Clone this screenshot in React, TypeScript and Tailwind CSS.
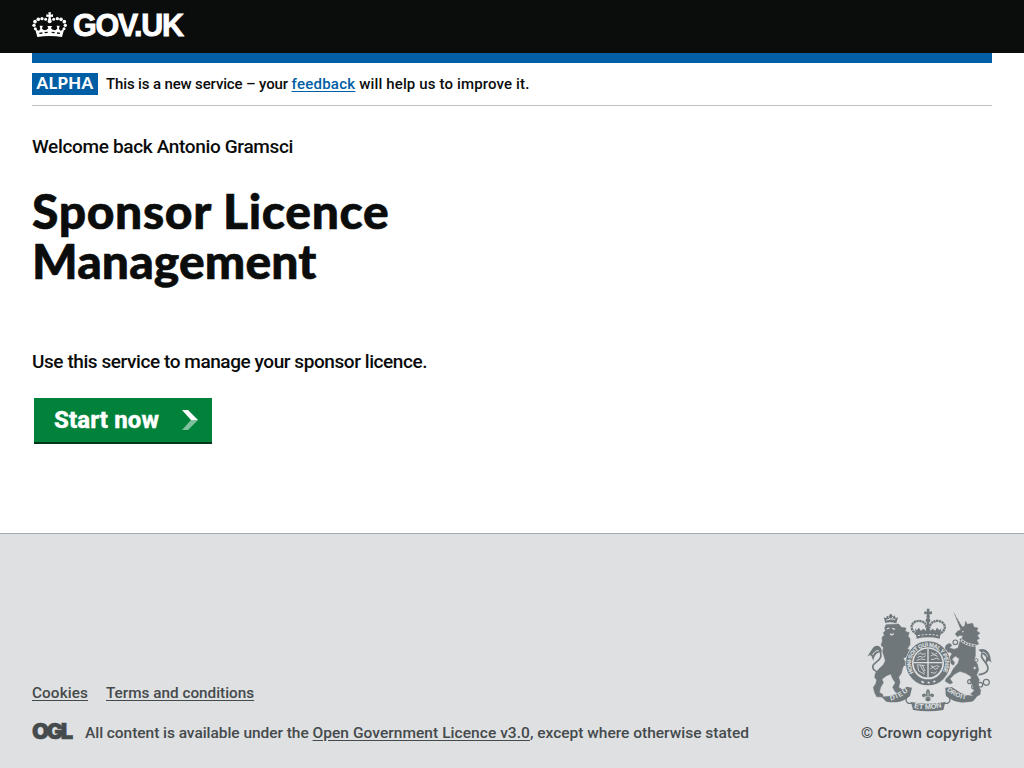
import React from "react";

function Crown() {
  return (
    <svg viewBox="0 0 132 120" className="h-[40px] w-[44px]" fill="#fff" aria-hidden="true">
      <path d="M61 22h8l-1 7 7-1v8l-7-1 2 12-5 4-5-4 2-12-7 1v-8l7 1z" />
      <circle cx="65" cy="49" r="6" />
      <circle cx="53" cy="43" r="4.5" />
      <circle cx="42" cy="41" r="5" />
      <circle cx="31" cy="43" r="5.5" />
      <circle cx="21" cy="50" r="5.5" />
      <circle cx="18" cy="61" r="5" />
      <circle cx="22" cy="71" r="4.5" />
      <circle cx="77" cy="43" r="4.5" />
      <circle cx="88" cy="41" r="5" />
      <circle cx="99" cy="43" r="5.5" />
      <circle cx="109" cy="50" r="5.5" />
      <circle cx="112" cy="61" r="5" />
      <circle cx="108" cy="71" r="4.5" />
      <path d="M28 96l-8-29 8 9 5 1 4-6-2-9h9l-2 9 6 5 8-2 5-4-3-7h14l-3 7 5 4 8 2 6-5-2-9h9l-2 9 4 6 5-1 8-9-8 29c-24-4-50-4-74 0z" />
      <path d="M34 85l9-1M50 83l9-1M71 82l9 1M87 84l9 1" stroke="#0b0c0c" strokeWidth="4" />
    </svg>
  );
}

function Crest() {
  return (
    <svg viewBox="0 0 420 360" className="h-[120px] w-[140px]" fill="#6f777b" aria-hidden="true">
      <defs>
        <path id="garter" d="M161 218A51 51 0 1 1 247 218" />
        <path id="dieu" d="M92 301Q123 294 147 271" />
        <path id="mon" d="M162 324Q204 332 248 321" />
        <path id="droit" d="M260 271Q287 294 321 299" />
      </defs>

      <path d="M76 69l-5-17 7 3 3-8 5 3 4-8 5 1 4 7 5-4 3 9 7-3-5 18c-11-4-22-4-33-1z" />
      <path d="M79 60q13-5 27-2M86 52l4 5M98 51l-2 5" fill="none" stroke="#dee0e2" strokeWidth="3" />
      <path
        d="M78 74L74 84 76 92 70 98 73 106 66 112 67 124 63 136 70 142 68 156 72 168 76 182 70 194 56 208 46 220 44 232 50 240 47 252 40 262 44 278 50 290 68 291 69 284 58 277 62 262 70 248 66 238 78 228 92 222 98 236 106 248 98 262 106 276 124 283 138 276 128 270 116 262 120 246 116 232 124 220 128 204 132 196 146 200 154 188 146 182 134 184 130 174 148 168 156 160 150 150 142 146 150 134 150 116 144 108 148 98 136 94 138 84 124 82 116 72Z"
        stroke="#6f777b"
        strokeWidth="1.5"
        strokeLinejoin="round"
      />
      <path d="M80 87l8-3M97 85l8 3M90 101l5 4 6-4" fill="none" stroke="#dee0e2" strokeWidth="4" />
      <path d="M57 216C35 212 33 197 48 187S66 170 59 148" fill="none" stroke="#6f777b" strokeWidth="5" />
      <path d="M65 150c-5-17-21-16-28-4-6 8-9 14-15 24 8-7 13-6 14 3l4 9c3-17 9-24 25-27z" />
      <path d="M38 165c3-9 10-14 18-13" fill="none" stroke="#dee0e2" strokeWidth="3" />

      <path d="M200 26h9l-1 9 8-1v9l-8-1 2 10-5 4-6-4 2-10-8 1v-9l8 1z" />
      <circle cx="204" cy="61" r="7" />
      <path d="M170 102C136 82 166 50 193 68q7 6 11 34 4-28 12-34c26-18 58 14 23 34" fill="none" stroke="#6f777b" strokeWidth="7" strokeDasharray="7 1.5" />
      <path d="M204 64v38" stroke="#6f777b" strokeWidth="7" />
      <path d="M165 85l5 6 7-8 5 9 9-6 5 6 8-9 8 9 5-6 9 6 5-9 7 8 6-6-5 31q-35-8-69 0z" />
      <path d="M174 107q31-7 61 0" fill="none" stroke="#dee0e2" strokeWidth="3" strokeDasharray="6 5" />

      <path d="M280 35l30 50-8 4z" />
      <path d="M286 50l8 5M292 60l8 4M298 69l8 4" stroke="#dee0e2" strokeWidth="1.5" />
      <path
        d="M306 82L314 78 317 64 322 73 338 70 342 82 354 84 350 92 360 100 352 106 358 116 350 120 356 132 346 136 346 150 346 168 342 180 352 192 356 210 350 224 358 240 352 254 362 270 360 284 344 290 332 282 342 272 338 254 330 244 334 230 318 220 300 214 284 222 270 236 278 248 270 252 256 244 258 236 272 222 280 206 294 190 298 176 286 168 276 178 284 188 280 196 270 188 266 176 276 162 270 156 258 158 254 148 258 136 268 130 276 136 268 144 282 148 294 144 298 130 302 118 310 108 300 106 292 110 286 102 292 94 302 90Z"
        stroke="#6f777b"
        strokeWidth="1.5"
        strokeLinejoin="round"
      />
      <path d="M306 96l5-2" stroke="#dee0e2" strokeWidth="3" />
      <path d="M300 117q18 18 47 20" fill="none" stroke="#dee0e2" strokeWidth="8" />
      <path d="M300 117q18 18 47 20" fill="none" stroke="#6f777b" strokeWidth="5" strokeDasharray="6 3" />
      <g fill="none" stroke="#6f777b" strokeWidth="3.5">
        <circle cx="286" cy="127" r="7" />
        <circle cx="329" cy="245" r="6" />
        <circle cx="341" cy="260" r="6" />
        <circle cx="361" cy="254" r="7" />
        <circle cx="379" cy="247" r="9" />
      </g>
      <g fill="#dee0e2" stroke="#6f777b" strokeWidth="3">
        <circle cx="349" cy="181" r="5" />
        <circle cx="344" cy="204" r="5" />
      </g>
      <path d="M356 224c28-3 34-17 22-34s-20-22-8-33" fill="none" stroke="#6f777b" strokeWidth="5" />
      <path d="M356 149c18-6 31 4 35 22 1 8 1 10 4 18-8-9-12-9-15 1-4-4-4-10-1-17-5-8-13-12-23-23z" />
      <path d="M367 156c8 1 14 6 16 14" fill="none" stroke="#dee0e2" strokeWidth="2.5" />

      <circle cx="204" cy="190" r="68" fill="#dee0e2" />
      <circle cx="204" cy="190" r="57" fill="none" stroke="#6f777b" strokeWidth="18" />
      <circle cx="204" cy="189" r="43" />
      <path d="M162 188h84M204 147v84" stroke="#dee0e2" strokeWidth="4" />
      <path
        d="M173 165l7-7 6 5 11-2M172 173l8-4 8 3 9-5M170 181l12-4 14 2M214 158l9 5 8-3M212 168l7-4 15 5M213 178h9l6-4 10 4M212 197l10 4 8-4 8 3M211 206l8-4 7 6 9-5M213 217l11 3 6-5M173 196l3 17 18 10M180 195l14 24M187 195l8 18M170 195c13-2 15 3 24 1"
        stroke="#dee0e2"
        strokeWidth="2.5"
        fill="none"
      />
      <path d="M184 244l8 4M203 248h6M220 246l6-3" stroke="#dee0e2" strokeWidth="5" />

      <path d="M63 289q28 3 56-12l21-17 16 3-5 21c-19 25-47 25-72 21z" />
      <path d="M256 263l19-2 28 18q19 9 39 8l15-4-17 20c-29 9-63 5-83-19z" />
      <path d="M150 286c-18 7-15 30 7 23M258 286c18 7 15 30-7 23" fill="none" stroke="#6f777b" strokeWidth="4" />
      <path d="M153 306q51 10 103 0l-6 24q-45 8-91 0z" />
      <path d="M204 266q10 10 4 19 7-8 13-2 3 8-5 9h-7v4h5l-6 8h-8l-6-8h5v-4h-7q-8-1-5-9 6-6 13 2-6-9 4-19z" />
      <path d="M204 275v13M193 289h22" stroke="#dee0e2" strokeWidth="2" />
      <g fill="#dee0e2" fontFamily="Liberation Sans, sans-serif" fontWeight="700">
        <text fontSize="17" stroke="#dee0e2" strokeWidth="0.4"><textPath href="#garter" textLength="214" lengthAdjust="spacing">HONI·SOIT QUI MAL Y PENSE</textPath></text>
        <text fontSize="20"><textPath href="#dieu" textLength="60">DIEU</textPath></text>
        <text fontSize="22"><textPath href="#mon" textLength="84">ET MON</textPath></text>
        <text fontSize="20"><textPath href="#droit" textLength="64">DROIT</textPath></text>
      </g>
    </svg>
  );
}

export default function App() {
  return (
    <div className="flex h-[768px] w-full flex-col overflow-hidden bg-white font-['Roboto',sans-serif] font-medium text-[#0b0c0c]">
      <header className="h-[53px] shrink-0 bg-[#0b0c0c] px-8">
        <a href="#" className="flex h-full items-center text-white">
          <span className="-mt-[3px] -ml-1"><Crown /></span>
          <span className="-mt-0.5 ml-px font-['Liberation_Sans',sans-serif] text-[30.5px] leading-[53px] font-bold tracking-[-1.3px] [-webkit-text-stroke:0.9px_white]">GOV.UK</span>
        </a>
      </header>
      <main className="mx-8 grow">
        <div className="h-[10px] bg-[#005ea5]" />
        <div className="flex h-[43px] items-center border-b border-[#bfc1c3] text-[15px] leading-5">
          <strong className="mr-2 flex h-[22px] w-[66px] items-center justify-center bg-[#005ea5] pb-[2px] font-['Lato',sans-serif] text-[16.5px] font-black tracking-[0.4px] text-white">ALPHA</strong>
          <span className="whitespace-nowrap"><span className="tracking-[-0.14px]">This is a new service – your </span><a href="#" className="tracking-[0.25px] text-[#005ea5] underline underline-offset-2">feedback</a><span className="tracking-[0.14px]"> will help us to improve it.</span></span>
        </div>
        <p className="mt-[28px] text-[19px] leading-[25px] tracking-[-0.34px]">Welcome back Antonio Gramsci</p>
        <h1 className="mt-[27px] mb-[63px] w-[480px] font-['Lato',sans-serif] text-[48px] leading-[50px] font-black [-webkit-text-stroke:0.6px_#0b0c0c]">
          <span className="tracking-[0.65px]">Sponsor Licence</span><br />
          <span className="tracking-[0.1px]">Management</span>
        </h1>
        <p className="text-[19px] leading-[25px] tracking-[-0.43px]">Use this service to manage your sponsor licence.</p>
        <a href="#" className="mt-[24px] ml-0.5 flex h-[46px] w-[178px] items-center justify-between border-b-2 border-[#003618] bg-[#00823b] pr-[14px] pl-5 text-white">
          <span className="text-[24px] leading-[44px] font-extrabold tracking-[0.1px] [-webkit-text-stroke:0.3px_white]">Start now</span>
          <svg viewBox="0 0 16 20" className="h-5 w-4">
            <path d="M0 0h6l10 10H9z" fill="#fff" />
            <path d="M9 10h7L6 20H0z" fill="#80c19d" />
          </svg>
        </a>
      </main>
      <footer className="flex h-[235px] shrink-0 justify-between border-t border-[#a1acb2] bg-[#dee0e2] px-8 text-[#454a4c]">
        <div className="flex flex-col pt-[149px] text-[15.5px] leading-5">
          <nav className="flex gap-[18px] text-[15.3px]">
            <a href="#" className="tracking-[0.1px] underline underline-offset-2">Cookies</a>
            <a href="#" className="underline underline-offset-2">Terms and conditions</a>
          </nav>
          <div className="mt-5 flex items-center">
            <span className="-mt-1 w-[53px] font-['Inter',sans-serif] text-[22px] leading-5 font-black tracking-[-2.5px] [-webkit-text-stroke:0.6px_#454a4c]">OGL</span>
            <span className="whitespace-nowrap"><span className="tracking-[-0.05px]">All content is available under the </span><a href="#" className="tracking-[0.05px] underline underline-offset-2">Open Government Licence v3.0</a>, except where otherwise stated</span>
          </div>
        </div>
        <div className="flex flex-col items-end pt-[66px]">
          <span className="-mr-2"><Crest /></span>
          <a href="#" className="mt-[3px] text-[15.5px] leading-5 tracking-[0.1px]">© Crown copyright</a>
        </div>
      </footer>
    </div>
  );
}
